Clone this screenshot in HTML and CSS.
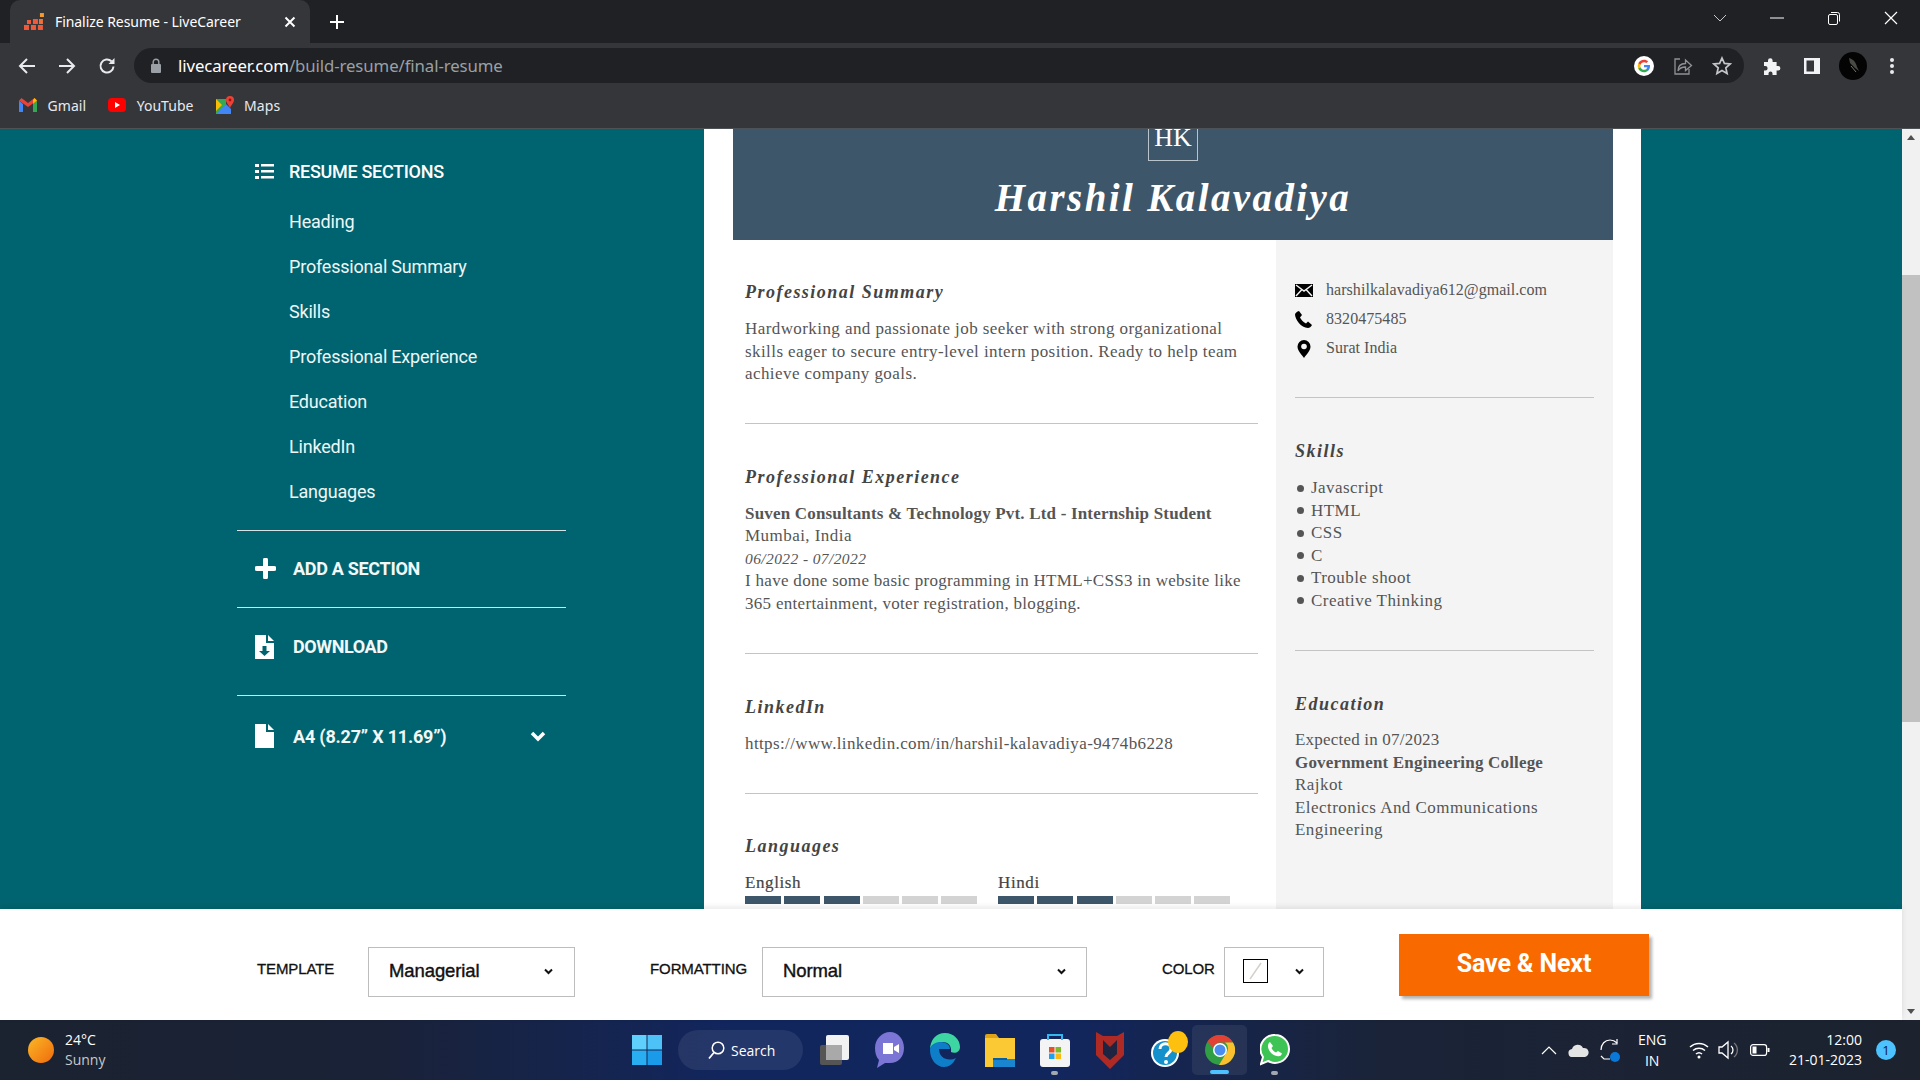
FILE: index.html
```html
<!DOCTYPE html>
<html lang="en">
  <head>
    <meta charset="UTF-8" />
    <title>Finalize Resume - LiveCareer</title>
    <link rel="stylesheet" href="styles.css">
  </head>

  <body>
    <!-- browser chrome -->
    <div class="tabstrip">
      <div class="tab">
        <svg class="tab-icon" width="21" height="18" viewBox="0 0 21 18">
          <rect x="0" y="12" width="5" height="5" fill="#ee5a3a" />
          <rect x="7" y="12" width="5" height="5" fill="#ee5a3a" />
          <rect x="14" y="12" width="5" height="5" fill="#ee5a3a" />
          <rect x="3" y="7" width="4" height="4" fill="#ee5a3a" />
          <rect x="9" y="6" width="5" height="5" fill="#ee5a3a" />
          <rect x="15" y="6" width="4" height="5" fill="#f0703a" />
          <rect x="16" y="0" width="4" height="4" fill="#f59a2e" />
        </svg>
        <span class="tab-title">Finalize Resume - LiveCareer</span>
        <svg class="tab-close" width="12" height="12" viewBox="0 0 12 12"><path d="M1.5 1.5l9 9M10.5 1.5l-9 9" stroke="#fff" stroke-width="2" /></svg>
      </div>
      <svg class="new-tab" width="16" height="16" viewBox="0 0 16 16"><path d="M8 1v14M1 8h14" stroke="#fff" stroke-width="2" /></svg>
      <div class="window-controls">
        <svg width="14" height="10" viewBox="0 0 14 10"><path d="M1 2l6 6 6-6" fill="none" stroke="#c8c9cb" /></svg>
        <svg width="14" height="10" viewBox="0 0 14 10"><path d="M0 5h14" stroke="#fff" /></svg>
        <svg width="14" height="14" viewBox="0 0 14 14"><rect x="1.5" y="3.5" width="9" height="10" rx="1.5" fill="none" stroke="#fff" /><path d="M4 1.5h6.5a2 2 0 0 1 2 2v7" fill="none" stroke="#fff" /></svg>
        <svg width="14" height="14" viewBox="0 0 14 14"><path d="M1 1l12 12M13 1L1 13" stroke="#fff" stroke-width="1.2" /></svg>
      </div>
    </div>

    <div class="toolbar">
      <svg class="nav-btn" width="18" height="18" viewBox="0 0 18 18"><path d="M17 9H2M9 2L2 9l7 7" fill="none" stroke="#e8eaed" stroke-width="2" /></svg>
      <svg class="nav-btn" width="18" height="18" viewBox="0 0 18 18"><path d="M1 9h15M9 2l7 7-7 7" fill="none" stroke="#e8eaed" stroke-width="2" /></svg>
      <svg class="nav-btn" width="18" height="18" viewBox="0 0 18 18"><path d="M15.5 9.5a6.5 6.5 0 1 1-2-5.2" fill="none" stroke="#e8eaed" stroke-width="2" /><path d="M16.5 1v6h-6z" fill="#e8eaed" /></svg>
      <div class="omnibox">
        <svg class="omni-lock" width="12" height="15" viewBox="0 0 12 15"><rect x="1" y="6" width="10" height="9" rx="1" fill="#9aa0a6" /><path d="M3.2 6V4a2.8 2.8 0 0 1 5.6 0v2" fill="none" stroke="#9aa0a6" stroke-width="1.4" /></svg>
        <span class="url"><span class="url-host">livecareer.com</span>/build-resume/final-resume</span>
        <svg class="omni-g" width="20" height="20" viewBox="0 0 20 20">
          <circle cx="10" cy="10" r="10" fill="#fff" />
          <path d="M16 10.2c0-.5 0-.9-.1-1.3H10v2.4h3.4c-.2.8-.6 1.4-1.3 1.9v1.5h2.1c1.2-1.1 1.8-2.7 1.8-4.5z" fill="#4285f4" />
          <path d="M10 16.2c1.7 0 3.100-.6 4.200-1.500l-2.100-1.500c-.6.4-1.300.6-2.100.6-1.600 0-3-1.100-3.500-2.600H4.300v1.600c1.100 2.100 3.200 3.400 5.700 3.400z" fill="#34a853" />
          <path d="M6.500 11.200a3.700 3.700 0 0 1 0-2.400V7.200H4.300a6.200 6.200 0 0 0 0 5.600z" fill="#fbbc05" />
          <path d="M10 6.200c.9 0 1.700.3 2.400.9l1.800-1.800C13.100 4.400 11.700 3.800 10 3.800c-2.500 0-4.600 1.300-5.700 3.400l2.200 1.600C7 7.300 8.400 6.200 10 6.200z" fill="#ea4335" />
        </svg>
        <svg width="20" height="20" viewBox="0 0 20 20"><path d="M7 3H2v15h14v-5" fill="none" stroke="#8e9196" stroke-width="1.3" /><path d="M5 15c0-5 3-7.500 7.500-7.500V4l6 5.500-6 5v-3.500C9 11 6.500 12 5 15z" fill="none" stroke="#8e9196" stroke-width="1.3" /></svg>
        <svg width="20" height="20" viewBox="0 0 20 20"><path d="M10 2l2.400 5.400 5.800.6-4.400 3.800 1.300 5.700L10 14.600l-5.100 2.900 1.300-5.700L1.800 8l5.800-.6z" fill="none" stroke="#c4c6c9" stroke-width="1.7" /></svg>
      </div>
      <div class="toolbar-end">
        <svg width="18" height="18" viewBox="0 0 18 18"><path d="M1 5h4V3.500a2.300 2.300 0 0 1 4.600 0V5h4v4h1.500a2.300 2.300 0 0 1 0 4.600H13.600V18H9.500v-1.500a2 2 0 0 0-4 0V18H1v-4.500h1.300a2.300 2.300 0 0 0 0-4.600H1z" fill="#f1f3f4" /></svg>
        <svg width="18" height="18" viewBox="0 0 18 18"><rect x="1" y="1" width="16" height="16" fill="#f1f3f4" /><rect x="3.500" y="3.500" width="7.500" height="11" fill="#35363a" /></svg>
        <svg class="avatar" width="28" height="28" viewBox="0 0 28 28"><circle cx="14" cy="14" r="14" fill="#040404" /><path d="M10 6c4 1 7 4 8 9l2 4-4-3-5-5z" fill="#4a4a44" /><path d="M12 14l5 6" stroke="#77776c" /></svg>
        <svg width="4" height="18" viewBox="0 0 4 18"><circle cx="2" cy="3" r="2" fill="#e8eaed" /><circle cx="2" cy="9" r="2" fill="#e8eaed" /><circle cx="2" cy="15" r="2" fill="#e8eaed" /></svg>
      </div>
    </div>

    <div class="bookmarks">
      <div class="bookmark">
        <svg width="18" height="14" viewBox="0 0 18 14">
          <path d="M0 2.500V14h4V6z" fill="#4285f4" /><path d="M14 6v8h4V2.500z" fill="#34a853" />
          <path d="M0 2.500L9 9l9-6.500L15.500 0 9 5 2.500 0z" fill="#ea4335" /><path d="M14 2v4l4-3.500L15.500 0z" fill="#fbbc04" />
        </svg>
        Gmail
      </div>
      <div class="bookmark">
        <svg width="18" height="14" viewBox="0 0 18 14"><rect width="18" height="14" rx="4" fill="#f00" /><path d="M7 4l5 3-5 3z" fill="#fff" /></svg>
        YouTube
      </div>
      <div class="bookmark">
        <svg width="18" height="18" viewBox="0 0 18 18">
          <path d="M0 3h10v15H0z" fill="#34a853" /><path d="M0 18L10 8l5 5v5z" fill="#4285f4" /><path d="M0 3l6 6-6 6z" fill="#fbbc04" />
          <path d="M14 0a4 4 0 0 1 4 4c0 3-3 5-4 8-1-3-4-5-4-8a4 4 0 0 1 4-4z" fill="#ea4335" /><circle cx="14" cy="4" r="1.400" fill="#a50e0e" />
        </svg>
        Maps
      </div>
    </div>

    <!-- page -->
    <div class="viewport">
      <div class="page">
        <div class="workspace">
          <nav class="side-nav">
            <div class="side-nav-inner">
              <div class="nav-title">
                <svg width="19" height="15" viewBox="0 0 19 15"><path d="M0 0h4v3H0zM0 6h4v3H0zM0 12h4v3H0zM6 0h13v2.500H6zM6 6h13v2.500H6zM6 12h13v2.500H6z" fill="#fff" /></svg>
                RESUME SECTIONS
              </div>
              <ul class="nav-list">
                <li>Heading</li>
                <li>Professional Summary</li>
                <li>Skills</li>
                <li>Professional Experience</li>
                <li>Education</li>
                <li>LinkedIn</li>
                <li>Languages</li>
              </ul>
              <div class="nav-row nav-add">
                <svg width="21" height="21" viewBox="0 0 21 21"><path d="M10.500 2v17M2 10.500h17" stroke="#fff" stroke-width="5" stroke-linecap="round" /></svg>
                ADD A SECTION
              </div>
              <div class="nav-row nav-download">
                <svg width="19" height="24" viewBox="0 0 19 24"><path d="M0 0h11v8h8v16H0z" fill="#fff" /><path d="M13 0l6 6h-6z" fill="#fff" /><path d="M7.500 11h4v5H15l-5.500 5L4 16h3.500z" fill="#006470" /></svg>
                DOWNLOAD
              </div>
              <div class="nav-row nav-size">
                <svg width="19" height="24" viewBox="0 0 19 24"><path d="M0 0h11v8h8v16H0z" fill="#fff" /><path d="M13 0l6 6h-6z" fill="#fff" /></svg>
                <span class="nav-size-label">A4 (8.27” X 11.69”)</span>
                <svg width="16" height="11" viewBox="0 0 16 11"><path d="M2 2l6 6 6-6" fill="none" stroke="#fff" stroke-width="3.500" /></svg>
              </div>
            </div>
          </nav>

          <div class="paper">
            <div class="resume">
              <header class="resume-head">
                <div class="monogram">HK</div>
                <h1 class="resume-name">Harshil Kalavadiya</h1>
              </header>
              <div class="resume-body">
                <main class="resume-main">
                  <section class="res-section res-first">
                    <h2>Professional Summary</h2>
                    <p class="res-summary">Hardworking and passionate job seeker with strong organizational skills eager to secure entry-level intern position. Ready to help team achieve company goals.</p>
                  </section>
                  <section class="res-section res-exp">
                    <h2>Professional Experience</h2>
                    <p class="res-strong">Suven Consultants &amp; Technology Pvt. Ltd - Internship Student</p>
                    <p>Mumbai, India</p>
                    <p class="res-date">06/2022 - 07/2022</p>
                    <p class="res-desc">I have done some basic programming in HTML+CSS3 in website like 365 entertainment, voter registration, blogging.</p>
                  </section>
                  <section class="res-section res-link">
                    <h2>LinkedIn</h2>
                    <p class="res-url">https://www.linkedin.com/in/harshil-kalavadiya-9474b6228</p>
                  </section>
                  <section class="res-section res-last">
                    <h2>Languages</h2>
                    <div class="lang-row">
                      <div class="lang">
                        <p class="lang-name">English</p>
                        <div class="lang-bar"><i class="on"></i><i class="on"></i><i class="on"></i><i></i><i></i><i></i></div>
                      </div>
                      <div class="lang">
                        <p class="lang-name">Hindi</p>
                        <div class="lang-bar"><i class="on"></i><i class="on"></i><i class="on"></i><i></i><i></i><i></i></div>
                      </div>
                    </div>
                  </section>
                </main>
                <aside class="resume-side">
                  <section class="side-section side-contact">
                    <div class="contact">
                      <svg width="18" height="13" viewBox="0 0 18 13"><rect width="18" height="13" fill="#000" /><path d="M1 1l8 6 8-6M1 12l5.500-6M17 12l-5.500-6" fill="none" stroke="#f4f4f4" stroke-width="1.400" /></svg>
                      harshilkalavadiya612@gmail.com
                    </div>
                    <div class="contact">
                      <svg width="18" height="17" viewBox="0 0 18 17"><path d="M4 0l3 4-2 2.500c1 2 3 4.500 6 6l2-2 4 3.500c-1 2-2.500 3-4 3C6 17 0 8 0 3.500 0 2 2 .5 4 0z" fill="#000" /></svg>
                      8320475485
                    </div>
                    <div class="contact">
                      <svg width="18" height="18" viewBox="0 0 18 18"><path d="M9 0a6.500 6.500 0 0 1 6.500 6.500C15.500 11 11 15 9 18c-2-3-6.500-7-6.500-11.500A6.500 6.500 0 0 1 9 0z" fill="#000" /><circle cx="9" cy="6.500" r="2.800" fill="#f4f4f4" /></svg>
                      Surat India
                    </div>
                  </section>
                  <section class="side-section">
                    <h2>Skills</h2>
                    <ul class="skills">
                      <li>Javascript</li>
                      <li>HTML</li>
                      <li>CSS</li>
                      <li>C</li>
                      <li>Trouble shoot</li>
                      <li>Creative Thinking</li>
                    </ul>
                  </section>
                  <section class="side-section side-last">
                    <h2>Education</h2>
                    <p class="edu-date">Expected in 07/2023</p>
                    <p class="res-strong">Government Engineering College</p>
                    <p>Rajkot</p>
                    <p>Electronics And Communications Engineering</p>
                  </section>
                </aside>
              </div>
            </div>
          </div>
          <div class="teal-right"></div>
        </div>

        <div class="bottom-bar">
          <span class="bar-label label-template">TEMPLATE</span>
          <div class="select select-template">Managerial
            <svg width="9" height="7" viewBox="0 0 9 7"><path d="M1 1.500l3.500 3.500L8 1.500" fill="none" stroke="#111" stroke-width="2" /></svg>
          </div>
          <span class="bar-label label-format">FORMATTING</span>
          <div class="select select-format">Normal
            <svg width="9" height="7" viewBox="0 0 9 7"><path d="M1 1.500l3.500 3.500L8 1.500" fill="none" stroke="#111" stroke-width="2" /></svg>
          </div>
          <span class="bar-label label-color">COLOR</span>
          <div class="select select-color">
            <svg class="swatch" width="25" height="24" viewBox="0 0 25 24"><rect x=".5" y=".5" width="24" height="23" fill="#fff" stroke="#000" /><path d="M18 4L7 20" stroke="#d4cfc9" stroke-width="1.500" /></svg>
            <svg width="9" height="7" viewBox="0 0 9 7"><path d="M1 1.500l3.500 3.500L8 1.500" fill="none" stroke="#111" stroke-width="2" /></svg>
          </div>
          <button class="save-btn">Save &amp; Next</button>
        </div>
      </div>

      <div class="scrollbar">
        <svg width="18" height="18" viewBox="0 0 18 18"><path d="M5 11l4-5 4 5z" fill="#505050" /></svg>
        <div class="scroll-track"><div class="scroll-thumb"></div></div>
        <svg width="18" height="18" viewBox="0 0 18 18"><path d="M5 7l4 5 4-5z" fill="#505050" /></svg>
      </div>
    </div>

    <!-- windows taskbar -->
    <footer class="taskbar">
      <div class="weather">
        <div class="sun"></div>
        <div class="weather-text">
          <div>24°C</div>
          <div class="weather-sub">Sunny</div>
        </div>
      </div>
      <div class="task-icons">
        <div class="task-slot slot-start">
          <svg width="30" height="30" viewBox="0 0 30 30"><path d="M0 0h14.500v14.500H0z" fill="#5fd0fb" /><path d="M15.500 0H30v14.500H15.500z" fill="#4cc2f7" /><path d="M0 15.500h14.500V30H0z" fill="#2aaef2" /><path d="M15.500 15.500H30V30H15.500z" fill="#1a9bea" /></svg>
        </div>
        <div class="task-search">
          <svg width="17" height="19" viewBox="0 0 17 19"><circle cx="10" cy="7" r="5.800" fill="none" stroke="#fff" stroke-width="1.500" /><path d="M6 11.500L1 17.500" stroke="#fff" stroke-width="1.800" /></svg>
          Search
        </div>
        <div class="task-slot slot-view">
          <svg width="30" height="30" viewBox="0 0 30 30"><rect x="1" y="10" width="22" height="20" rx="2" fill="#555" /><rect x="7" y="0" width="23" height="25" rx="2" fill="#f2f2f2" /><rect x="7" y="10" width="16" height="15" fill="#a9a9a9" /></svg>
        </div>
        <div class="task-slot">
          <svg width="30" height="36" viewBox="0 0 30 36"><path d="M15 0c8 0 14 7 14 16s-6 15-14 15h-5l-8 5 2-8C1 25 0 20 0 16 0 7 7 0 15 0z" fill="#7b75d6" /><path d="M8 11h10v11H8zM19 15l5-3v9l-5-3z" fill="#fff" /></svg>
        </div>
        <div class="task-slot">
          <svg width="30" height="34" viewBox="0 0 30 34"><path d="M15 0c9 0 15 7 15 14 0 5-5 7-9 5 1-6-3-10-8-10C6 9 0 13 0 17 0 7 6 0 15 0z" fill="#3dd6a3" /><path d="M0 17c0-5 5-8 11-8 5 0 9 3 9 7H9c0 9 9 13 17 9-3 6-7 9-12 9C6 34 0 26 0 17z" fill="#0f7ec9" /></svg>
        </div>
        <div class="task-slot">
          <svg width="30" height="33" viewBox="0 0 30 33"><path d="M0 2a2 2 0 0 1 2-2h9l3 4h-14z" fill="#e0a318" /><rect y="4" width="30" height="29" fill="#fbc934" /><rect x="8" y="25" width="22" height="8" fill="#1a86d0" /><path d="M8 25h14" stroke="#0a5e9e" stroke-width="2" /></svg>
        </div>
        <div class="task-slot has-dot">
          <svg width="30" height="34" viewBox="0 0 30 34"><rect y="6" width="30" height="28" rx="3" fill="#f4f4f4" /><path d="M8 7V2h14v5" fill="none" stroke="#35b6f0" stroke-width="2" /><rect x="9" y="14" width="5.500" height="5.500" fill="#e8502a" /><rect x="15.500" y="14" width="5.500" height="5.500" fill="#7cb82a" /><rect x="9" y="20.500" width="5.500" height="5.500" fill="#1fa0e8" /><rect x="15.500" y="20.500" width="5.500" height="5.500" fill="#fab915" /></svg>
        </div>
        <div class="task-slot">
          <svg width="28" height="38" viewBox="0 0 28 38"><path d="M0 1l7 4h14l7-4v23L14 38 0 24z" fill="#b02a25" /><path d="M7 9l7 7 7-7v14l-7 6-7-6z" fill="#1f2440" /></svg>
        </div>
        <div class="task-slot slot-help">
          <svg width="38" height="38" viewBox="0 0 38 38"><circle cx="14" cy="22" r="14" fill="#fff" /><circle cx="14" cy="22" r="12" fill="#1490cd" /><path d="M9 18c0-7 11-7 11 0 0 4-5 4-5 8" fill="none" stroke="#fff" stroke-width="3" /><circle cx="15" cy="31" r="2" fill="#fff" /><ellipse cx="27" cy="11" rx="10" ry="11" fill="#fdc00f" /></svg>
        </div>
        <div class="task-slot slot-active">
          <svg width="30" height="30" viewBox="0 0 30 30">
            <circle cx="15" cy="15" r="15" fill="#2f9e44" />
            <path d="M15 0a15 15 0 0 1 13 7.500H15a7.500 7.500 0 0 0-7 5L2.500 6.500A15 15 0 0 1 15 0z" fill="#e34133" />
            <path d="M28 7.500A15 15 0 0 1 14 30l7-11.500a7.500 7.500 0 0 0-1-11z" fill="#fbc02d" />
            <circle cx="15" cy="15" r="7" fill="#fff" /><circle cx="15" cy="15" r="5.500" fill="#4a8cf0" />
          </svg>
          <i class="active-mark"></i>
        </div>
        <div class="task-slot has-dot">
          <svg width="30" height="32" viewBox="0 0 30 32"><path d="M15 1a14 14 0 0 1 0 28c-3 0-5-1-7-2l-7 3 2-7A14 14 0 0 1 15 1z" fill="#3ec454" stroke="#fff" stroke-width="2" /><path d="M10 8l3 4-1.500 2c1 2 2.500 3.500 4.500 4.500l2-1.500 4 2.500c-1 3-3 3-5 2.500C12 21 8.500 17 8 13c-.2-2 .5-4 2-5z" fill="#fff" /></svg>
        </div>
      </div>
      <div class="tray">
        <svg class="tray-chevron" width="16" height="10" viewBox="0 0 16 10"><path d="M1 9l7-7 7 7" fill="none" stroke="#fff" stroke-width="1.200" /></svg>
        <svg class="tray-cloud" width="21" height="14" viewBox="0 0 21 14"><path d="M5 14a4 4 0 0 1-1-8 6 6 0 0 1 11-1 4.500 4.500 0 0 1 2 9z" fill="#e4e4e4" /></svg>
        <svg class="tray-sync" width="22" height="24" viewBox="0 0 22 24"><path d="M2 12C2 6 6 2 11 2c3 0 5 1 7 3M2 18l3 3h6" fill="none" stroke="#fff" stroke-width="1.200" /><path d="M18 1v5h-5" fill="none" stroke="#fff" stroke-width="1.200" /><circle cx="16" cy="19" r="5" fill="#0a78d7" /></svg>
        <div class="tray-lang"><div>ENG</div><div>IN</div></div>
        <svg class="tray-wifi" width="20" height="20" viewBox="0 0 20 20"><path d="M1 7a13 13 0 0 1 18 0M4 10.500a9 9 0 0 1 12 0M7 14a4.500 4.500 0 0 1 6 0" fill="none" stroke="#fff" stroke-width="1.500" /><circle cx="10" cy="17" r="1.500" fill="#fff" /></svg>
        <svg class="tray-sound" width="20" height="20" viewBox="0 0 20 20"><path d="M1 7h3l6-5v16l-6-5H1z" fill="none" stroke="#fff" stroke-width="1.300" /><path d="M13 6a5 5 0 0 1 0 8" fill="none" stroke="#fff" stroke-width="1.300" /><path d="M16 3a9 9 0 0 1 0 14" fill="none" stroke="#777" stroke-width="1.300" /></svg>
        <svg class="tray-battery" width="20" height="12" viewBox="0 0 20 12"><rect x=".6" y=".6" width="16" height="10.800" rx="2.500" fill="none" stroke="#fff" stroke-width="1.200" /><rect x="2.500" y="2.500" width="4" height="7" fill="#fff" /><rect x="17.500" y="4" width="2" height="4" fill="#fff" /></svg>
        <div class="tray-clock"><div>12:00</div><div>21-01-2023</div></div>
        <div class="tray-badge">1</div>
      </div>
    </footer>
  </body>
</html>
```

FILE: styles.css
```css
html,
body {
  margin: 0;
  padding: 0;
}
body {
  width: 1920px;
  height: 1080px;
  overflow: hidden;
  display: flex;
  flex-direction: column;
  font-family: "Noto Sans", sans-serif;
}
ul {
  list-style: none;
  margin: 0;
  padding: 0;
}
p,
h1,
h2 {
  margin: 0;
}

/* browser chrome */
.tabstrip {
  height: 43px;
  flex: none;
  background: #202124;
  display: flex;
  align-items: flex-end;
  padding-left: 10px;
}
.tab {
  width: 300px;
  height: 43px;
  box-sizing: border-box;
  padding: 0 14px;
  background: #35363a;
  border-radius: 10px 10px 0 0;
  display: flex;
  align-items: center;
  color: #fff;
  font-size: 14px;
}
.tab-title {
  margin-left: 10px;
  width: 230px;
  letter-spacing: -0.05px;
}
.new-tab {
  align-self: center;
  margin-left: 19px;
}
.window-controls {
  margin-left: auto;
  align-self: flex-start;
  height: 36px;
  display: flex;
  align-items: center;
  gap: 43px;
  padding-right: 22px;
}
.toolbar {
  height: 45px;
  flex: none;
  background: #35363a;
  display: flex;
  align-items: center;
  box-sizing: border-box;
  padding: 0 0 0 18px;
  gap: 22px;
}
.omnibox {
  width: 1610px;
  height: 35px;
  margin: 0 0 0 -4px;
  box-sizing: border-box;
  background: #202124;
  border-radius: 18px;
  display: flex;
  align-items: center;
  padding: 0 12px 0 16px;
  gap: 19px;
  font-size: 16.8px;
  color: #9aa0a6;
  letter-spacing: -0.1px;
}
.omni-lock {
  margin-right: -4px;
}
.url {
  flex: 1;
  margin-left: 1px;
}
.url-host {
  color: #fff;
}
.toolbar-end {
  display: flex;
  align-items: center;
  gap: 22px;
  margin-left: -3px;
}
.avatar {
  margin-left: -4px;
  margin-right: 1px;
}
.bookmarks {
  height: 41px;
  flex: none;
  box-sizing: border-box;
  background: #35363a;
  border-bottom: 1px solid #4d5257;
  display: flex;
  align-items: center;
  padding: 0 0 6px 19px;
  gap: 22px;
  color: #e8eaed;
  font-size: 14px;
  letter-spacing: 0.05px;
}
.bookmark {
  display: flex;
  align-items: center;
  gap: 10.5px;
}

/* page area */
.viewport {
  height: 891px;
  flex: none;
  display: flex;
}
.page {
  width: 1902px;
  display: flex;
  flex-direction: column;
}
.workspace {
  height: 780px;
  flex: none;
  display: flex;
  overflow: hidden;
}
.side-nav {
  width: 704px;
  flex: none;
  background: #006470;
  box-sizing: border-box;
  padding: 20px 0 0 237px;
  font-family: Roboto, sans-serif;
  color: #fff;
}
.side-nav-inner {
  width: 329px;
}
.nav-title {
  height: 45px;
  display: flex;
  align-items: center;
  padding-left: 18px;
  gap: 15px;
  font-size: 18px;
  font-weight: 500;
  letter-spacing: -0.3px;
}
.nav-list {
  padding-bottom: 16px;
  border-bottom: 1px solid #d5e3e5;
  margin-top: 5px;
}
.nav-list li {
  height: 45px;
  line-height: 45px;
  padding-left: 52px;
  font-size: 18px;
  letter-spacing: -0.2px;
  color: #eef6f7;
}
.nav-row {
  display: flex;
  align-items: center;
  padding-left: 18px;
  gap: 19px;
  font-size: 18px;
  font-weight: 700;
  letter-spacing: -0.4px;
  color: #f2f8f8;
}
.nav-add {
  height: 74px;
  padding-bottom: 2px;
  gap: 17px;
  letter-spacing: -0.3px;
  border-bottom: 1px solid #d5e3e5;
}
.nav-download {
  height: 77px;
  padding-bottom: 10px;
  border-bottom: 1px solid #d5e3e5;
}
.nav-size {
  height: 80px;
  letter-spacing: -0.2px;
}
.nav-size-label {
  width: 218px;
}
.paper {
  width: 937px;
  flex: none;
  box-sizing: border-box;
  padding: 0 28px 0 29px;
  background: #fff;
}
.teal-right {
  flex: 1;
  background: #006470;
}

/* resume sheet */
.resume {
  width: 880px;
  font-family: "Liberation Serif", serif;
  color: #555;
}
.resume-head {
  height: 111px;
  overflow: hidden;
  background: #3e5669;
  box-sizing: border-box;
  display: flex;
  flex-direction: column;
  align-items: center;
  justify-content: flex-end;
  padding-bottom: 17px;
  color: #fff;
}
.monogram {
  width: 50px;
  height: 50px;
  flex: none;
  box-sizing: border-box;
  border: 1px solid #b9c3cb;
  display: flex;
  align-items: flex-end;
  justify-content: center;
  padding-bottom: 9px;
  font-size: 26px;
  line-height: 26px;
}
.resume-name {
  margin-top: 12px;
  font-size: 39px;
  line-height: 50px;
  font-weight: 700;
  font-style: italic;
  letter-spacing: 2.4px;
}
.resume-body {
  display: flex;
  font-size: 17px;
  line-height: 22.5px;
  letter-spacing: 0.45px;
}
.resume-body h2 {
  font-size: 18px;
  line-height: 24px;
  font-weight: 700;
  font-style: italic;
  letter-spacing: 1.48px;
  color: #444;
  margin-bottom: 14px;
}
.resume-main {
  width: 543px;
  flex: none;
  box-sizing: border-box;
  padding: 0 18px 0 12px;
}
.res-section {
  padding: 41px 0 37px;
  border-bottom: 1px solid #c4c4c4;
}
.res-first {
  padding-top: 40px;
}
.res-exp {
  padding-bottom: 38px;
}
.res-link {
  padding-bottom: 37px;
}
.res-last {
  padding-top: 40px;
  border-bottom: 0;
}
.res-summary {
  letter-spacing: 0.42px;
}
.res-desc {
  letter-spacing: 0.3px;
}
.res-url {
  letter-spacing: 0.38px;
}
.res-strong {
  font-weight: 700;
  letter-spacing: 0.18px;
}
.res-date {
  font-size: 15.5px;
  font-style: italic;
  letter-spacing: 0.4px;
}
.lang-row {
  display: flex;
  gap: 19px;
}
.lang {
  width: 234px;
}
.lang-name {
  letter-spacing: 0.6px;
  color: #444;
  -webkit-text-stroke: 0.2px #444;
}
.lang-bar {
  display: flex;
  gap: 3.3px;
  margin-top: 2px;
}
.lang-bar i {
  width: 36px;
  height: 8px;
  background: #d3d3d3;
}
.lang-bar i.on {
  background: #3e5669;
}
.resume-side {
  width: 337px;
  flex: none;
  box-sizing: border-box;
  padding: 0 19px;
  background: #f4f4f4;
}
.side-section {
  padding: 41px 0 38px;
  border-bottom: 1px solid #c4c4c4;
}
.side-contact {
  padding: 36px 0 34px;
  font-size: 16px;
  letter-spacing: 0.05px;
}
.side-last {
  padding-top: 41px;
  padding-bottom: 100px;
  border-bottom: 0;
}
.resume-body .side-last h2 {
  margin-bottom: 13px;
}
.edu-date {
  letter-spacing: 0.2px;
}
.contact {
  height: 29px;
  display: flex;
  align-items: center;
  gap: 13px;
}
.skills li {
  display: flex;
  align-items: center;
  gap: 7px;
}
.skills li::before {
  content: "";
  width: 7px;
  height: 7px;
  margin-left: 2px;
  border-radius: 50%;
  background: #555;
}

/* bottom bar */
.bottom-bar {
  height: 111px;
  flex: none;
  position: relative;
  background: #fff;
  box-shadow: 0 -2px 6px rgba(0, 0, 0, 0.09);
  display: flex;
  align-items: center;
  box-sizing: border-box;
  padding: 14px 0 0 257px;
  font-family: "Liberation Sans", sans-serif;
  color: #111;
}
.bar-label {
  font-size: 15px;
  letter-spacing: -0.1px;
  margin-top: -6px;
  -webkit-text-stroke: 0.3px #111;
}
.select {
  height: 50px;
  box-sizing: border-box;
  border: 1px solid #bdbdbd;
  display: flex;
  align-items: center;
  justify-content: space-between;
  font-size: 18.5px;
  letter-spacing: -0.1px;
  -webkit-text-stroke: 0.4px #111;
}
.select-template,
.select-format {
  padding-bottom: 2px;
}
.select-template svg,
.select-format svg {
  margin-top: 2px;
}
.label-template {
  width: 111px;
}
.select-template {
  width: 207px;
  padding-left: 20px;
  padding-right: 21px;
}
.label-format {
  margin-left: 75px;
  width: 112px;
}
.select-format {
  width: 325px;
  padding-left: 20px;
  padding-right: 20px;
}
.label-color {
  margin-left: 75px;
  width: 62px;
}
.select-color {
  width: 100px;
  padding: 0 19px 0 18px;
}
.swatch {
  margin-top: -2px;
}
.save-btn {
  width: 250px;
  height: 62px;
  margin: -14px 0 0 75px;
  padding: 0 0 2px;
  border: 0;
  background: #f86900;
  color: #fff;
  font-family: Roboto, sans-serif;
  font-size: 25px;
  font-weight: 700;
  letter-spacing: -0.1px;
  box-shadow: 3px 3px 3px rgba(0, 0, 0, 0.3);
}
.scrollbar {
  width: 18px;
  flex: none;
  background: #f1f1f1;
  display: flex;
  flex-direction: column;
}
.scroll-track {
  flex: 1;
  padding-top: 128px;
}
.scroll-thumb {
  height: 447px;
  background: #c1c1c1;
}

/* taskbar */
.taskbar {
  height: 60px;
  flex: none;
  display: flex;
  align-items: center;
  background: linear-gradient(90deg, #1b2230 0%, #1a2238 20%, #12265e 38%, #12265e 55%, #1a2338 72%, #1c222e 100%);
  color: #fff;
  font-size: 14px;
  font-family: "Open Sans", sans-serif;
}
.weather {
  width: 618px;
  flex: none;
  display: flex;
  align-items: center;
  padding-left: 28px;
  box-sizing: border-box;
  gap: 11px;
}
.sun {
  width: 26px;
  height: 26px;
  border-radius: 50%;
  background: linear-gradient(135deg, #fbb826, #f06a0c);
}
.weather-text {
  line-height: 20px;
}
.weather-sub {
  color: #c6c9ce;
}
.task-icons {
  display: flex;
  align-items: center;
}
.task-slot {
  width: 55px;
  height: 50px;
  flex: none;
  display: flex;
  align-items: center;
  justify-content: center;
  position: relative;
}
.slot-start svg {
  margin-left: 2px;
}
.slot-view svg {
  margin-left: -2px;
}
.slot-help svg {
  margin-left: 10px;
}
.task-search {
  width: 125px;
  height: 40px;
  margin: 0 4px 0 5px;
  box-sizing: border-box;
  border-radius: 20px;
  background: rgba(255, 255, 255, 0.08);
  display: flex;
  align-items: center;
  padding-left: 30px;
  gap: 6px;
  flex: none;
}
.has-dot::after {
  content: "";
  position: absolute;
  bottom: 0;
  left: 24px;
  width: 7px;
  height: 4px;
  border-radius: 2px;
  background: #a3a8b0;
}
.slot-active {
  background: rgba(255, 255, 255, 0.07);
  border-radius: 5px;
}
.active-mark {
  position: absolute;
  bottom: 1px;
  left: 18px;
  width: 19px;
  height: 4px;
  border-radius: 2px;
  background: #4cc2ff;
}
.tray {
  margin-left: auto;
  display: flex;
  align-items: center;
  padding-right: 24px;
}
.tray-chevron {
  margin-right: 10.5px;
}
.tray-sync {
  margin-left: 10px;
}
.tray-lang {
  margin-left: 17px;
  text-align: center;
  line-height: 21px;
}
.tray-wifi {
  margin-left: 23px;
}
.tray-sound {
  margin-left: 9px;
}
.tray-battery {
  margin-left: 11.5px;
}
.tray-clock {
  margin-left: 19px;
  text-align: right;
  line-height: 20px;
}
.tray-badge {
  margin-left: 14px;
  width: 20px;
  height: 20px;
  border-radius: 50%;
  background: #4cc2ff;
  color: #10202e;
  font-size: 13px;
  line-height: 20px;
  text-align: center;
}
```
